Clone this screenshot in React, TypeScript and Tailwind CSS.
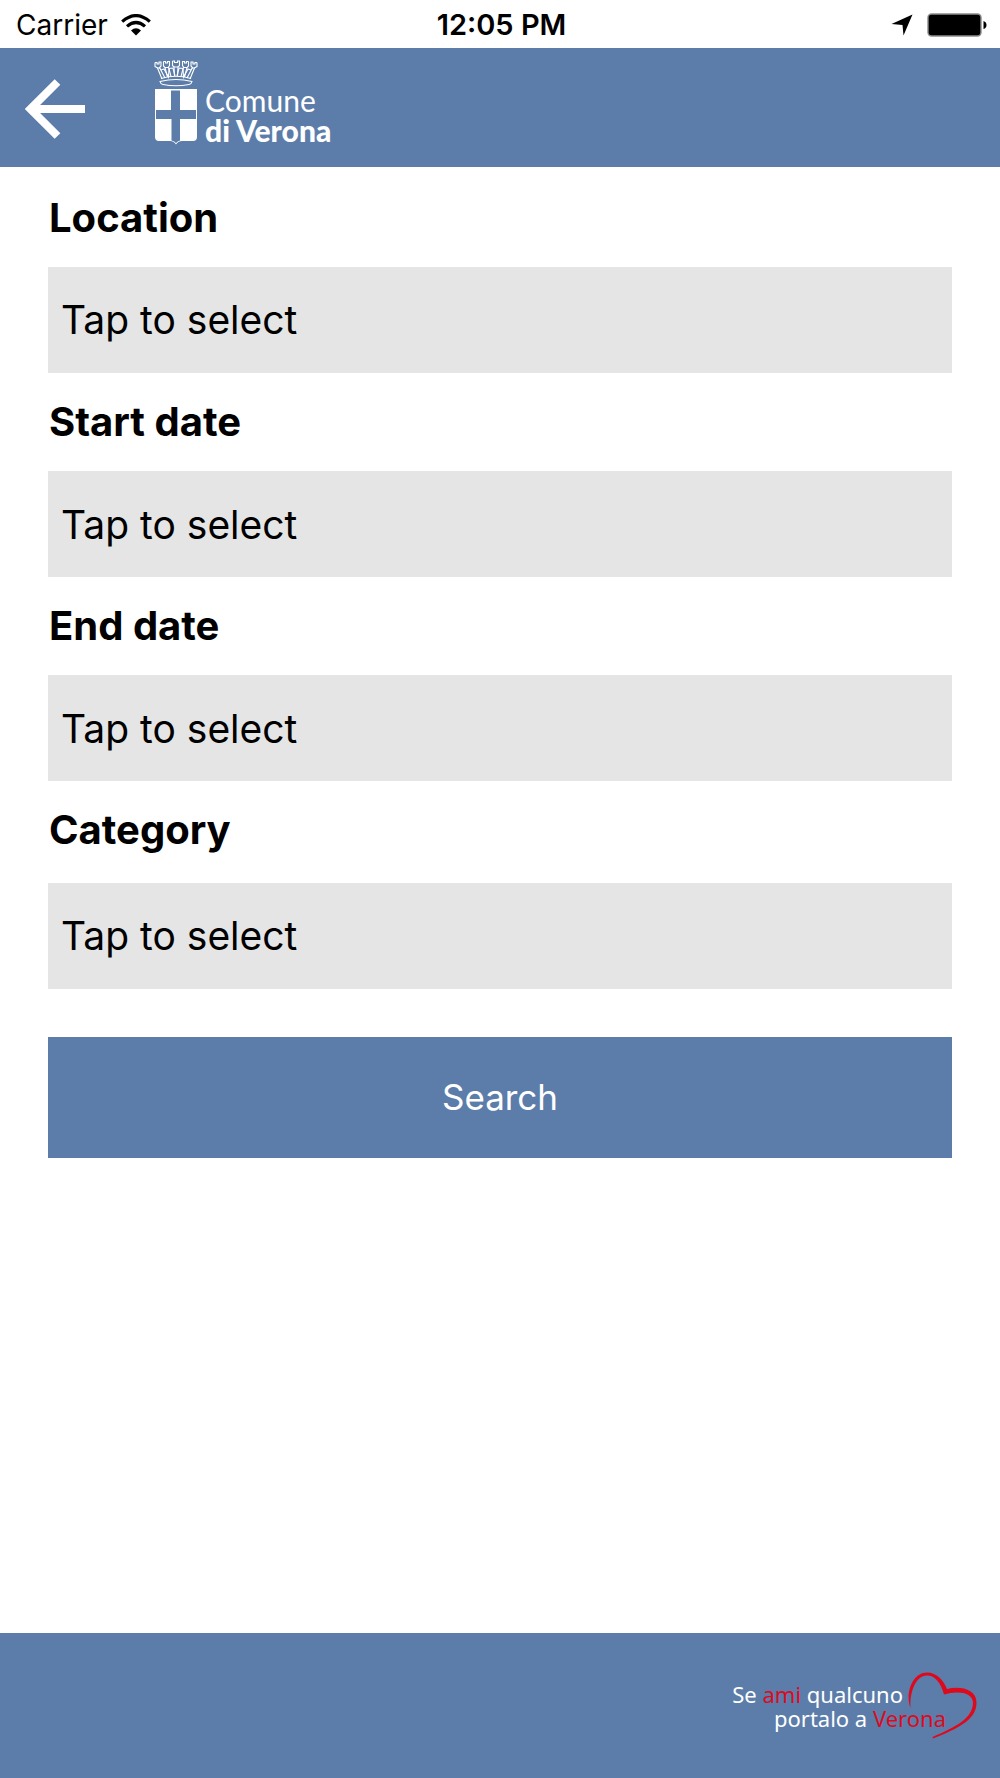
import React, { useState } from "react";

// ── Field definitions ─────────────────────────────────────────────────────────
const LOCATIONS = ["Arena", "Teatro Romano", "Castelvecchio", "Piazza Bra"];
const CATEGORIES = ["Music", "Theatre", "Exhibitions", "Sport"];

const FIELD_CLASS =
  "block w-full h-[106px] px-[13px] pt-px bg-[#e5e5e5] text-[39px] text-black rounded-none border-0 outline-none appearance-none placeholder:text-black placeholder:opacity-100";

// ── Status bar icons ──────────────────────────────────────────────────────────
const WifiIcon: React.FC = () => (
  <svg width="30" height="22" viewBox="0 0 30 22" aria-hidden="true">
    <g fill="none" stroke="#000" strokeWidth="3.2">
      <path d="M1.2 7.6 Q15 -4.4 28.8 7.6" />
      <path d="M6 12.4 Q15 4.6 24 12.4" />
    </g>
    <path d="M10 16.5 Q15 12 20 16.5 L15 21.5 Z" fill="#000" />
  </svg>
);

const LocationArrow: React.FC = () => (
  <svg width="22" height="22" viewBox="0 0 22 22" aria-hidden="true">
    <path d="M21.5 0.5 L0.5 10 L11.5 11 L12.5 21.5 Z" fill="#000" />
  </svg>
);

const BatteryIcon: React.FC = () => (
  <svg width="60" height="25" viewBox="0 0 60 25" aria-hidden="true">
    <rect x="1" y="1" width="53" height="22" rx="3.5" fill="#000" stroke="#8c8c8c" strokeWidth="1.4" />
    <path d="M56.5 8 Q59.5 9 59.5 12 Q59.5 15 56.5 16 Z" fill="#000" />
  </svg>
);

// ── Brand drawings ────────────────────────────────────────────────────────────
const BackArrow: React.FC = () => (
  <svg width="60" height="60" viewBox="0 0 60 60" fill="none" stroke="#fff" strokeWidth="8" aria-hidden="true">
    <path d="M32.5 3 L5.5 30 L32.5 57 M5.5 30 H60" />
  </svg>
);

const Crest: React.FC = () => (
  <svg width="44" height="86" viewBox="0 0 44 86" aria-hidden="true">
    {/* Crown towers */}
    <g fill="none" stroke="#fff" strokeWidth="1.1">
      <path d="M1 2.5 h2 v1.5 h2 v-2 h2 v4 l-1.5 1.5 L11 18 M1 2.5 v4 l2.5 1.5 L8 19" />
      <path d="M9.5 1.5 h2 v1.5 h2 v-1.5 h2 v4 l-1 1.5 L17 16.5 M9.5 1.5 v4.5 l1.5 1.5 L13.5 17" />
      <path d="M18.5 1 h2 v1.5 h3 V1 h2 v4.5 l-1.5 1.5 L23.5 16 M18.5 1 v4.5 l1.5 1.5 L20.5 16" />
      <path d="M34.5 1.5 h-2 v1.5 h-2 v-1.5 h-2 v4 l1 1.5 L27 16.5 M34.5 1.5 v4.5 l-1.5 1.5 L30.5 17" />
      <path d="M43 2.5 h-2 v1.5 h-2 v-2 h-2 v4 l1.5 1.5 L33 18 M43 2.5 v4 l-2.5 1.5 L36 19" />
      <path d="M3.5 8 h3 M11 7.5 h4 M20 7 h4 M29 7.5 h4 M37.5 8 h3" />
      <path d="M7 10 l3 -1 L14.5 17 L15 8.5 L19 8 L21 16 M37 10 l-3 -1 L29.5 17 L29 8.5 L25 8 L23 16" />
      {/* Band */}
      <path d="M7 18.5 Q22 14 37 18.5 M6 21.5 Q22 17.5 38 21.5 Q37.5 24 35 24.5 Q22 27 9 24.5 Q6.5 24 6 21.5 Z" />
    </g>
    {/* Shield */}
    <path
      d="M1 29 H43 V77 Q43 81 39 81 H28 Q24 81 22 84.5 Q20 81 16 81 H5 Q1 81 1 77 Z"
      fill="#fff"
    />
    <path
      d="M17 30.5 H26 V50 H42 V59 H26 V80.5 Q23.5 81 22 83 Q20.5 81 17.5 80.5 V59 H2 V50 H17 Z"
      fill="#5c7da9"
    />
  </svg>
);

const Heart: React.FC = () => (
  <svg width="70" height="68" viewBox="0 0 70 68" aria-hidden="true">
    <path
      d="M3.5 36 C-2 22 5 0.5 20 0.5 C30 0.5 36.5 8.5 40 17 C53 13.5 70 17 69.5 31 C69.5 48 50 57 26 66.5 L25.5 65 C50 54.5 65.5 46 66 31 C66 20 50 18.5 37 22.5 C34 11 28 3.5 20 3.5 C8 3.5 2.5 22 3.5 36 Z"
      fill="#dd0a1e"
    />
  </svg>
);

interface FieldProps {
  id: string;
  label: string;
  children: React.ReactNode;
  wide?: boolean;
}

const Field: React.FC<FieldProps> = ({ id, label, children, wide = false }) => (
  <div className={wide ? "flex flex-col gap-7" : "flex flex-col gap-6"}>
    <label htmlFor={id} className="pl-px text-[40px] leading-[50px] font-bold">
      {label}
    </label>
    {children}
  </div>
);

const App: React.FC = () => {
  const [location, setLocation] = useState("");
  const [startDate, setStartDate] = useState("");
  const [endDate, setEndDate] = useState("");
  const [category, setCategory] = useState("");

  return (
    <div className="min-h-screen flex flex-col bg-white text-black font-['Inter',sans-serif]">
      {/* ================= STATUS BAR ================= */}
      <div className="h-12 grid grid-cols-[1fr_auto_1fr] items-center pl-4 pr-[13px] pt-[2px] text-[28px] leading-[46px]">
        <div className="flex items-center gap-[13px]">
          <span>Carrier</span>
          <WifiIcon />
        </div>
        <span className="text-center text-[29px] font-semibold">12:05 PM</span>
        <div className="flex items-center justify-end gap-[14px]">
          <LocationArrow />
          <BatteryIcon />
        </div>
      </div>

      {/* ================= HEADER ================= */}
      <header className="h-[119px] flex items-start gap-[69px] px-[25px] pt-3 bg-[#5c7da9] text-white">
        <button type="button" aria-label="Back" className="mt-[19px]">
          <BackArrow />
        </button>
        <div className="flex items-end gap-[7px] font-['Lato',sans-serif] text-[30px] leading-[30px]">
          <Crest />
          <div className="pb-px">
            <p>Comune</p>
            <p className="font-black">di Verona</p>
          </div>
        </div>
      </header>

      {/* ================= SEARCH FORM ================= */}
      <form
        className="flex flex-col px-12 pt-[26px] pb-12"
        onSubmit={(e) => e.preventDefault()}
      >
        <div className="flex flex-col gap-6">
          <Field id="location" label="Location">
            <select
              id="location"
              value={location}
              onChange={(e) => setLocation(e.target.value)}
              className={FIELD_CLASS}
            >
              <option value="">Tap to select</option>
              {LOCATIONS.map((name) => (
                <option key={name}>{name}</option>
              ))}
            </select>
          </Field>

          <Field id="start-date" label="Start date">
            <input
              id="start-date"
              type="text"
              placeholder="Tap to select"
              value={startDate}
              onChange={(e) => setStartDate(e.target.value)}
              className={FIELD_CLASS}
            />
          </Field>

          <Field id="end-date" label="End date">
            <input
              id="end-date"
              type="text"
              placeholder="Tap to select"
              value={endDate}
              onChange={(e) => setEndDate(e.target.value)}
              className={FIELD_CLASS}
            />
          </Field>

          <Field id="category" label="Category" wide>
            <select
              id="category"
              value={category}
              onChange={(e) => setCategory(e.target.value)}
              className={FIELD_CLASS}
            >
              <option value="">Tap to select</option>
              {CATEGORIES.map((name) => (
                <option key={name}>{name}</option>
              ))}
            </select>
          </Field>
        </div>

        <button
          type="submit"
          className="mt-12 h-[121px] w-full bg-[#5c7da9] text-white text-[35px]"
        >
          Search
        </button>
      </form>

      {/* ================= FOOTER ================= */}
      <footer className="mt-auto h-[145px] flex items-center justify-end pr-[23px] bg-[#5c7da9] text-white">
        <div className="relative pr-[31px] text-right font-['Noto_Sans',sans-serif] text-[22px] leading-6">
          <p className="pr-[43px]">
            Se <span className="text-[#dd0a1e]">ami</span> qualcuno
          </p>
          <p>
            portalo a <span className="text-[#dd0a1e]">Verona</span>
          </p>
          <div className="absolute right-0 -top-[10px]">
            <Heart />
          </div>
        </div>
      </footer>
    </div>
  );
};

export default App;
